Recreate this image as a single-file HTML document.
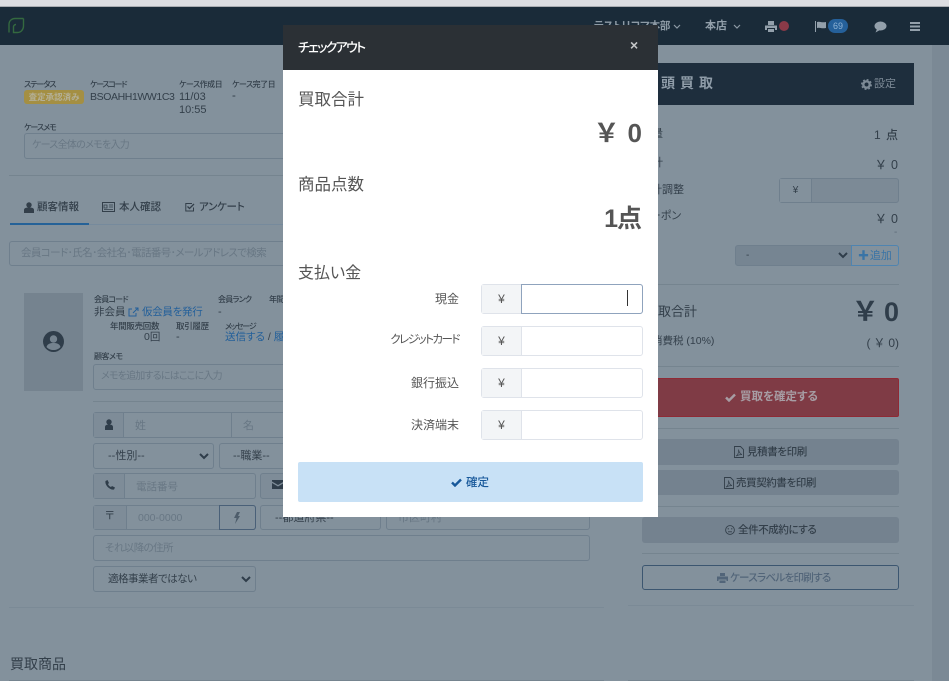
<!DOCTYPE html>
<html lang="ja"><head><meta charset="utf-8">
<style>
*{box-sizing:border-box}
html,body{margin:0;padding:0;width:949px;height:681px;overflow:hidden}
body{position:relative;background:#83919c;font-family:"Liberation Sans","Noto Sans CJK JP",sans-serif;color:#333f4a;font-size:12px;font-feature-settings:"palt"}
.a{position:absolute;white-space:nowrap;line-height:1.2}
.b{position:absolute;border:1px solid #6f7f8d;border-radius:3px}
.l{position:absolute;height:1px;background:#75848f}
.ph{color:#687784}
.lk{color:#24609a}
.s9{font-size:8px;letter-spacing:-.8px}
.g{background:#74828f;border:0;border-radius:3px}
svg{position:absolute;display:block}
#m{position:absolute;left:283px;top:25px;width:375px;height:492px;background:#fff}
#m .a{color:#555}
.ig{position:absolute;left:198px;width:162px;height:30px;border:1px solid #dfe3ea;border-radius:3px;background:#fff}
.ig i{position:absolute;left:0;top:0;width:40px;height:28px;background:#f3f5f7;border-right:1px solid #dfe3ea;font-style:normal;text-align:center;line-height:28px;font-size:12px;color:#555}
</style></head><body>
<div style="position:absolute;left:0;top:0;width:949px;height:6px;background:#dcdde1"></div>
<div style="position:absolute;left:0;top:6px;width:949px;height:1px;background:#a9acb1"></div>
<div style="position:absolute;left:0;top:7px;width:949px;height:38px;background:#1a2b39"></div>
<div style="position:absolute;left:932px;top:45px;width:17px;height:636px;background:#7b8995"></div>
<svg style="left:8px;top:17px" width="17" height="17" viewBox="0 0 17 17" fill="none" stroke="#34693f" stroke-width="1.4"><path d="M15.500 1.500H7C3.500 1.500 1 4 1 7.500V15.500"/><path d="M15.500 1.500V9C15.500 12.500 13 15.500 9.500 15.500H5.500V10C5.500 8.500 6.500 7.500 8 7.500"/></svg>

<div class="a" style="left:594px;top:20px;font-size:10.500px;color:#8d9aa5;font-weight:bold;letter-spacing:-.3px">テストリコマ本部</div>
<svg style="left:673px;top:24px" width="8" height="6" viewBox="0 0 8 6" fill="none" stroke="#8d9aa5" stroke-width="1.2"><path d="M1 1l3 3 3-3"/></svg>
<div class="a" style="left:705px;top:20px;font-size:11px;color:#93a0ab;font-weight:bold">本店</div>
<svg style="left:733px;top:24px" width="8" height="6" viewBox="0 0 8 6" fill="none" stroke="#8d9aa5" stroke-width="1.2"><path d="M1 1l3 3 3-3"/></svg>
<svg style="left:765px;top:21px" width="12" height="11" viewBox="0 0 12 11" fill="#93a0ab"><path d="M3 0h6v4H3zM0 4.500h12V9H10V7H2v2H0zM3 8h6v3H3z"/></svg>
<div style="position:absolute;left:779px;top:21px;width:10px;height:10px;border-radius:50%;background:#8a3a48"></div>
<svg style="left:815px;top:21px" width="12" height="11" viewBox="0 0 12 11" fill="#93a0ab"><path d="M0 0h1v11H0zM2 1c3-1 4 1 9 0v6c-5 1-6-1-9 0z"/></svg>
<div style="position:absolute;left:828px;top:19px;width:20px;height:14px;border-radius:7px;background:#25609a;color:#8fb3d4;font-size:9px;text-align:center;line-height:14px">69</div>
<svg style="left:874px;top:21px" width="13" height="12" viewBox="0 0 13 12" fill="#93a0ab"><ellipse cx="6.500" cy="5" rx="6" ry="4.500"/><path d="M3 8L1.500 11.500 6 9z"/></svg>
<svg style="left:910px;top:22px" width="10" height="9" viewBox="0 0 10 9" fill="#93a0ab"><path d="M0 0h10v2H0zM0 3.500h10v2H0zM0 7h10v2H0z"/></svg>

<div class="a s9" style="left:24px;top:80px;font-weight:500;letter-spacing:-1px">ステータス</div>
<div style="position:absolute;left:24px;top:90px;width:60px;height:14px;background:#a48f43;border-radius:3px;color:#b4b097;font-size:8.500px;font-weight:bold;text-align:center;line-height:14px;white-space:nowrap">査定承認済み</div>
<div class="a s9" style="left:90px;top:80px;font-weight:500;letter-spacing:-1.300px">ケースコード</div>
<div class="a" style="left:90px;top:91px;font-size:10.500px;letter-spacing:-.4px">BSOAHH1WW1C3</div>
<div class="a s9" style="left:179px;top:80px;font-weight:500;letter-spacing:-.5px">ケース作成日</div>
<div class="a" style="left:179px;top:91px;font-size:11px;line-height:13px">11/03<br>10:55</div>
<div class="a s9" style="left:232px;top:80px;font-weight:500;letter-spacing:-.5px">ケース完了日</div>
<div class="a" style="left:232px;top:90px;font-size:11.500px">-</div>
<div class="a s9" style="left:24px;top:123px;font-weight:500;letter-spacing:-1px">ケースメモ</div>
<div class="b" style="left:24px;top:133px;width:300px;height:26px"></div>
<div class="a ph" style="left:32px;top:140px;font-size:10px;letter-spacing:-.7px">ケース全体のメモを入力</div>
<div class="l" style="left:9px;top:175px;width:300px"></div>

<svg style="left:24px;top:202px" width="10" height="11" viewBox="0 0 10 11" fill="#333f4a"><circle cx="5" cy="3" r="2.700"/><path d="M0 11V8c0-2 2-2.500 5-2.500S10 6 10 8v3z"/></svg>
<div class="a" style="left:37px;top:201px;font-size:10.500px;font-weight:500">顧客情報</div>
<svg style="left:102px;top:202px" width="13" height="10" viewBox="0 0 13 10" fill="none" stroke="#333f4a"><rect x=".5" y=".5" width="12" height="9"/><path d="M2 3h3v3H2zM7 3h4M7 5h4M2 7.500h9" stroke-width=".8"/></svg>
<div class="a" style="left:119px;top:201px;font-size:10.500px;font-weight:500">本人確認</div>
<svg style="left:185px;top:202px" width="10" height="10" viewBox="0 0 10 10" fill="none" stroke="#333f4a"><path d="M8.500 5.500V9H.8V1.500H7"/><path d="M2.500 4.500l2 2L9 2" stroke-width="1.300"/></svg>
<div class="a" style="left:199px;top:201px;font-size:10.500px;font-weight:500;letter-spacing:-.3px">アンケート</div>
<div class="l" style="left:10px;top:224px;width:300px;background:#768a9c"></div>
<div style="position:absolute;left:10px;top:223px;width:79px;height:2px;background:#256298"></div>

<div class="b" style="left:9px;top:241px;width:300px;height:25px"></div>
<div class="a ph" style="left:21px;top:247px;font-size:10.500px;letter-spacing:-.6px">会員コード･氏名･会社名･電話番号･メールアドレスで検索</div>

<div style="position:absolute;left:24px;top:293px;width:59px;height:98px;background:#75838f"></div>
<svg style="left:43px;top:331px" width="21" height="21" viewBox="0 0 21 21"><circle cx="10.500" cy="10.500" r="10.500" fill="#2f3d4a"/><circle cx="10.500" cy="8" r="3.700" fill="#75838f"/><path d="M3.500 16c1-3.500 4-4 7-4s6 .5 7 4c-2 2-4 3-7 3s-5-1-7-3z" fill="#75838f"/></svg>
<div class="a s9" style="left:94px;top:295px;font-weight:500">会員コード</div>
<div class="a" style="left:94px;top:306px;font-size:10.500px">非会員</div>
<svg style="left:128px;top:307px" width="11" height="10" viewBox="0 0 11 10" fill="none" stroke="#24609a"><path d="M8 6v3H1V2h3M5 6l5-5M7 1h3v3"/></svg>
<div class="a lk" style="left:142px;top:306px;font-size:10.500px;letter-spacing:-.3px">仮会員を発行</div>
<div class="a s9" style="left:218px;top:295px;font-weight:500">会員ランク</div>
<div class="a" style="left:218px;top:306px;font-size:11px">-</div>
<div class="a s9" style="left:269px;top:295px;font-weight:500">年間</div>
<div class="a" style="left:110px;top:321px;font-size:8.500px;font-weight:500;letter-spacing:-.3px">年間販売回数</div>
<div class="a" style="left:144px;top:331px;font-size:10.500px">0回</div>
<div class="a" style="left:176px;top:321px;font-size:8.500px;font-weight:500;letter-spacing:-.3px">取引履歴</div>
<div class="a" style="left:176px;top:331px;font-size:11px">-</div>
<div class="a s9" style="left:225px;top:322px;font-weight:500;letter-spacing:-1.200px">メッセージ</div>
<div class="a" style="left:225px;top:331px;font-size:10.500px"><span class="lk">送信する</span> / <span class="lk">履歴</span></div>
<div class="a s9" style="left:94px;top:352px;font-weight:500;letter-spacing:-.5px">顧客メモ</div>
<div class="b" style="left:93px;top:364px;width:220px;height:26px"></div>
<div class="a ph" style="left:101px;top:371px;font-size:10px;letter-spacing:-.8px">メモを追加するにはここに入力</div>
<div class="l" style="left:93px;top:401px;width:220px"></div>

<div class="b" style="left:93px;top:412px;width:200px;height:26px"></div>
<div style="position:absolute;left:94px;top:413px;width:30px;height:24px;background:#7e8c98;border-right:1px solid #6f7f8d"></div>
<svg style="left:104px;top:419px" width="10" height="11" viewBox="0 0 10 11" fill="#2f3d4a"><circle cx="5" cy="3" r="2.700"/><path d="M1 11V8c0-2 2-2.500 4-2.500S9 6 9 8v3z"/></svg>
<div class="a ph" style="left:135px;top:420px;font-size:11px">姓</div>
<div style="position:absolute;left:231px;top:413px;width:1px;height:24px;background:#6f7f8d"></div>
<div class="a ph" style="left:243px;top:420px;font-size:11px">名</div>

<div class="b" style="left:93px;top:443px;width:121px;height:26px"></div>
<div class="a" style="left:108px;top:450px;font-size:11px">--性別--</div>
<svg style="left:199px;top:453px" width="10" height="7" viewBox="0 0 10 7" fill="none" stroke="#2f3d4a" stroke-width="2"><path d="M1 1l4 4 4-4"/></svg>
<div class="b" style="left:219px;top:443px;width:80px;height:26px"></div>
<div class="a" style="left:233px;top:450px;font-size:11px">--職業--</div>

<div class="b" style="left:93px;top:473px;width:163px;height:26px"></div>
<div style="position:absolute;left:94px;top:474px;width:31px;height:24px;background:#7e8c98;border-right:1px solid #6f7f8d"></div>
<svg style="left:105px;top:480px" width="10" height="10" viewBox="0 0 10 10" fill="#2f3d4a"><path d="M0.500 1L2.500 0 4 3 3 4C3.500 5.500 4.500 6.500 6 7L7 6 10 7.500 9 9.500C5 10.500-.5 5 .5 1z"/></svg>
<div class="a ph" style="left:136px;top:481px;font-size:10.500px">電話番号</div>
<div class="b" style="left:260px;top:473px;width:40px;height:26px;background:#7e8c98"></div>
<svg style="left:272px;top:480px" width="12" height="9" viewBox="0 0 12 9" fill="#2f3d4a"><path d="M0 0h12v1.500L6 5 0 1.500zM0 3l6 3.500L12 3v6H0z"/></svg>

<div class="b" style="left:93px;top:505px;width:163px;height:25px"></div>
<div style="position:absolute;left:94px;top:506px;width:33px;height:23px;background:#7e8c98;border-right:1px solid #6f7f8d"></div>
<div class="a" style="left:105px;top:510px;font-size:11px">〒</div>
<div class="a ph" style="left:138px;top:512px;font-size:10.500px">000-0000</div>
<div class="b" style="left:219px;top:505px;width:37px;height:25px;border-color:#4a6078;border-radius:0 3px 3px 0"></div>
<svg style="left:234px;top:512px" width="6" height="12" viewBox="0 0 6 12" fill="#4e5d6b"><path d="M3 0h3L4 4h2L1 12 2.500 6H0z"/></svg>
<div class="b" style="left:260px;top:505px;width:121px;height:25px"></div>
<div class="a" style="left:275px;top:512px;font-size:11px">--都道府県--</div>
<div class="b" style="left:386px;top:505px;width:204px;height:25px"></div>
<div class="a ph" style="left:398px;top:512px;font-size:11px">市区町村</div>

<div class="b" style="left:93px;top:535px;width:497px;height:26px"></div>
<div class="a ph" style="left:105px;top:542px;font-size:10.500px;letter-spacing:-.6px">それ以降の住所</div>
<div class="b" style="left:93px;top:566px;width:163px;height:26px"></div>
<div class="a" style="left:108px;top:573px;font-size:10.500px;letter-spacing:-.5px">適格事業者ではない</div>
<svg style="left:241px;top:576px" width="10" height="7" viewBox="0 0 10 7" fill="none" stroke="#2f3d4a" stroke-width="2"><path d="M1 1l4 4 4-4"/></svg>
<div class="l" style="left:9px;top:607px;width:595px;background:#7b8a96"></div>
<div class="a" style="left:10px;top:656px;font-size:14px">買取商品</div>
<div class="l" style="left:9px;top:680px;width:595px"></div>

<div style="position:absolute;left:628px;top:63px;width:286px;height:42px;background:#1e2e3d"></div>
<div class="a" style="left:661px;top:75px;font-size:14px;font-weight:bold;color:#8f9ca8;letter-spacing:5px">頭買取</div>
<svg style="left:861px;top:79px" width="11" height="11" viewBox="0 0 11 11"><circle cx="5.500" cy="5.500" r="3.200" fill="none" stroke="#7d8a96" stroke-width="2.400"/><circle cx="5.500" cy="5.500" r="4.800" fill="none" stroke="#7d8a96" stroke-width="1.400" stroke-dasharray="1.900 1.870"/></svg>
<div class="a" style="left:874px;top:78px;font-size:11px;color:#7d8a96">設定</div>

<div class="a" style="left:641px;top:128px;font-size:11px">数量</div>
<div class="a" style="right:50px;top:128px;font-size:12px;letter-spacing:1px;font-weight:500">1 点</div>
<div class="a" style="left:641px;top:157px;font-size:11px">合計</div>
<div class="a" style="right:50px;top:158px;font-size:12.500px;letter-spacing:1px">￥ 0</div>
<div class="a" style="left:640px;top:184px;font-size:11px">合計調整</div>
<div class="b" style="left:779px;top:178px;width:120px;height:25px;background:#7c8a96"></div>
<div style="position:absolute;left:780px;top:179px;width:32px;height:23px;background:#83919c;border-right:1px solid #6f7f8d;text-align:center;line-height:23px;font-size:10px">¥</div>
<div class="a" style="left:640px;top:210px;font-size:11px">クーポン</div>
<div class="a" style="right:50px;top:212px;font-size:12.500px;letter-spacing:1px">￥ 0</div>
<div class="a" style="left:894px;top:227px;font-size:10px;color:#5c6b78">-</div>
<div class="b" style="left:735px;top:245px;width:117px;height:21px;background:#768592;border-radius:3px 0 0 3px"></div>
<div class="a" style="left:746px;top:250px;font-size:10px">-</div>
<svg style="left:838px;top:252px" width="10" height="7" viewBox="0 0 10 7" fill="none" stroke="#2f3d4a" stroke-width="2"><path d="M1 1l4 4 4-4"/></svg>
<div class="b" style="left:851px;top:245px;width:48px;height:21px;border-color:#4f84b0;border-radius:0 3px 3px 0"></div>
<div class="a" style="left:858px;top:250px;font-size:11px;color:#3a74a6"><b>✚</b>&#8202;追加</div>
<div class="l" style="left:658px;top:284px;width:241px"></div>
<div class="a" style="left:645px;top:304px;font-size:13px">買取合計</div>
<div class="a" style="right:50px;top:296px;font-size:27px;font-weight:bold;color:#2f3d4a;word-spacing:1px">￥ 0</div>
<div class="a" style="left:652px;top:335px;font-size:10.500px">消費税 (10%)</div>
<div class="a" style="right:50px;top:336px;font-size:12px;word-spacing:1px">( ￥ 0)</div>
<div class="l" style="left:658px;top:366px;width:241px"></div>
<div style="position:absolute;left:640px;top:378px;width:259px;height:39px;background:#7f3b45;border:1px solid #8f2a35;border-radius:2px"></div>
<svg style="left:725px;top:393px" width="11" height="9" viewBox="0 0 11 9" fill="none" stroke="#a79da4" stroke-width="2.400"><path d="M1 4.500l3 3L10 1.500"/></svg>
<div class="a" style="left:740px;top:391px;font-size:11.500px;font-weight:bold;color:#a79da4">買取を確定する</div>
<div class="l" style="left:658px;top:428px;width:241px"></div>

<div class="g" style="position:absolute;left:642px;top:439px;width:257px;height:26px"></div>
<svg style="left:734px;top:446px" width="10" height="12" viewBox="0 0 10 12" fill="none" stroke="#333f4a" stroke-width=".9"><path d="M.5.500H6.500L9.500 3.500V11.500H.5z"/><path d="M2 10c2-1 3-4 2.500-6.500C5 6 6 8 8 8.500 6 8.500 4 9 2 10z" stroke-width=".7"/></svg>
<div class="a" style="left:747px;top:446px;font-size:10.500px;font-weight:500;letter-spacing:-.4px">見積書を印刷</div>
<div class="g" style="position:absolute;left:642px;top:470px;width:257px;height:25px"></div>
<svg style="left:724px;top:477px" width="10" height="12" viewBox="0 0 10 12" fill="none" stroke="#333f4a" stroke-width=".9"><path d="M.5.500H6.500L9.500 3.500V11.500H.5z"/><path d="M2 10c2-1 3-4 2.500-6.500C5 6 6 8 8 8.500 6 8.500 4 9 2 10z" stroke-width=".7"/></svg>
<div class="a" style="left:736px;top:477px;font-size:10.500px;font-weight:500;letter-spacing:-.4px">売買契約書を印刷</div>
<div class="l" style="left:642px;top:506px;width:257px"></div>
<div class="g" style="position:absolute;left:642px;top:517px;width:257px;height:26px"></div>
<svg style="left:725px;top:525px" width="10" height="10" viewBox="0 0 10 10" fill="none" stroke="#333f4a" stroke-width=".9"><circle cx="5" cy="5" r="4.400"/><path d="M3.200 3v1.500M6.800 3v1.500"/><path d="M3 6.800h4"/></svg>
<div class="a" style="left:738px;top:524px;font-size:10.500px;font-weight:500;letter-spacing:-.4px">全件不成約にする</div>
<div class="l" style="left:642px;top:553px;width:257px"></div>
<div class="b" style="left:642px;top:565px;width:257px;height:25px;border-color:#3c5670"></div>
<svg style="left:717px;top:573px" width="11" height="10" viewBox="0 0 11 10" fill="#526579"><path d="M3 0h5v3H3zM0 3.500h11V8H9.500V6.500h-8V8H0zM2.500 7.500h6V10h-6z"/></svg>
<div class="a" style="left:730px;top:572px;font-size:10.500px;color:#526579;font-weight:500;letter-spacing:-.7px">ケースラベルを印刷する</div>
<div class="l" style="left:628px;top:605px;width:286px;background:#7b8a96"></div>
<div class="l" style="left:628px;top:680px;width:286px"></div>

<div id="m">
<div style="position:absolute;left:0;top:0;width:375px;height:45px;background:#2b3035"></div>
<div class="a" style="left:15px;top:15px;font-size:13px;font-weight:500;letter-spacing:-1.700px"><span style="color:#fff">チェックアウト</span></div>
<div class="a" style="left:347px;top:12px;font-size:14px;font-weight:bold"><span style="color:#c5c7c9">×</span></div>
<div class="a" style="left:15px;top:66px;font-size:16.500px;font-weight:400">買取合計</div>
<div class="a" style="right:16px;top:93px;font-size:26px;font-weight:bold;word-spacing:4px">￥ 0</div>
<div class="a" style="left:15px;top:151px;font-size:16.500px">商品点数</div>
<div class="a" style="right:17px;top:179px;font-size:25px;font-weight:bold;letter-spacing:-1px">1点</div>
<div class="a" style="left:15px;top:239px;font-size:16px">支払い金</div>

<div class="a" style="right:199px;top:267px;font-size:12px">現金</div>
<div class="ig" style="top:259px"><i>¥</i></div>
<div style="position:absolute;left:238px;top:259px;width:122px;height:30px;border:1px solid #8fa3bd;border-radius:0 3px 3px 0"></div>
<div style="position:absolute;left:344px;top:265px;width:1px;height:16px;background:#333"></div>
<div class="a" style="right:199px;top:309px;font-size:11.500px;letter-spacing:-1.500px">クレジットカード</div>
<div class="ig" style="top:301px"><i>¥</i></div>
<div class="a" style="right:199px;top:351px;font-size:12px">銀行振込</div>
<div class="ig" style="top:343px"><i>¥</i></div>
<div class="a" style="right:199px;top:393px;font-size:12px">決済端末</div>
<div class="ig" style="top:385px"><i>¥</i></div>

<div style="position:absolute;left:15px;top:437px;width:345px;height:40px;background:#c8e1f6;border-radius:2px"></div>
<svg style="left:168px;top:453px" width="11" height="9" viewBox="0 0 11 9" fill="none" stroke="#17589a" stroke-width="2.400"><path d="M1 4.500l3 3L10 1.500"/></svg>
<div class="a" style="left:183px;top:452px;font-size:11.500px;font-weight:500"><span style="color:#17589a">確定</span></div>
</div>
</body></html>
